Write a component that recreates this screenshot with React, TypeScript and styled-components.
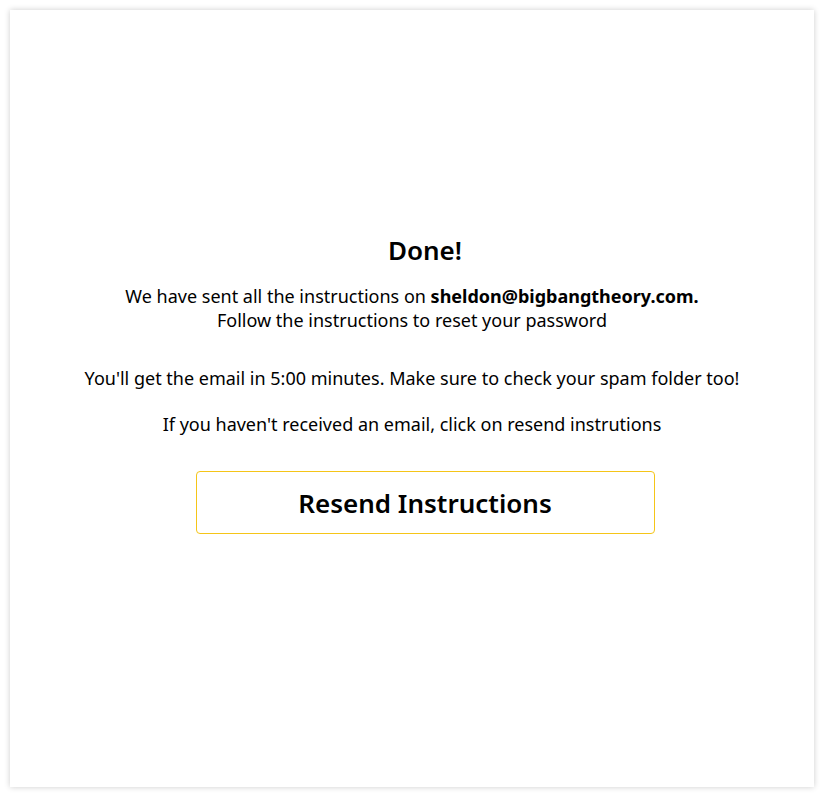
import * as React from 'react';
import styled, { createGlobalStyle } from 'styled-components';

const GlobalStyle = createGlobalStyle`
    * { box-sizing: border-box; }
    body {
        margin: 0;
        padding: 10px;
        background: #ffffff;
        font-family: 'Noto Sans', 'Open Sans', sans-serif;
        color: #000000;
    }
`;

const Card = styled.main`
    height: 777px;
    background: #ffffff;
    box-shadow: 0px 0px 6px rgba(0, 0, 0, 0.2);
    display: flex;
    flex-direction: column;
    justify-content: center;
    align-items: center;
    text-align: center;
    padding-bottom: 29px;
`;

const Title = styled.h1`
    margin: 0 0 18px 26px;
    font-size: 26px;
    font-weight: 600;
    line-height: 32px;
`;

const Text = styled.p<{ $gap?: number }>`
    margin: 0 0 ${props => props.$gap ?? 0}px;
    font-size: 18px;
    line-height: 24px;
`;

const Email = styled.strong`
    font-weight: 700;
`;

const Button = styled.button`
    margin: 35px 0 0 26px;
    width: 459px;
    height: 63px;
    background: #ffffff;
    border: 1px solid #f5c518;
    border-radius: 4px;
    font-family: 'Noto Sans', 'Open Sans', sans-serif;
    font-size: 26px;
    font-weight: 600;
    color: #000000;
    cursor: pointer;
`;

const App = () => {
    return (
        <>
            <GlobalStyle />
            <Card>
                <Title>Done!</Title>
                <Text>
                    We have sent all the instructions on <Email>sheldon@bigbangtheory.com.</Email>
                </Text>
                <Text $gap={34}>Follow the instructions to reset your password</Text>
                <Text $gap={22}>You'll get the email in 5:00 minutes. Make sure to check your spam folder too!</Text>
                <Text>If you haven't received an email, click on resend instrutions</Text>
                <Button>Resend Instructions</Button>
            </Card>
        </>
    );
};

export default App;
